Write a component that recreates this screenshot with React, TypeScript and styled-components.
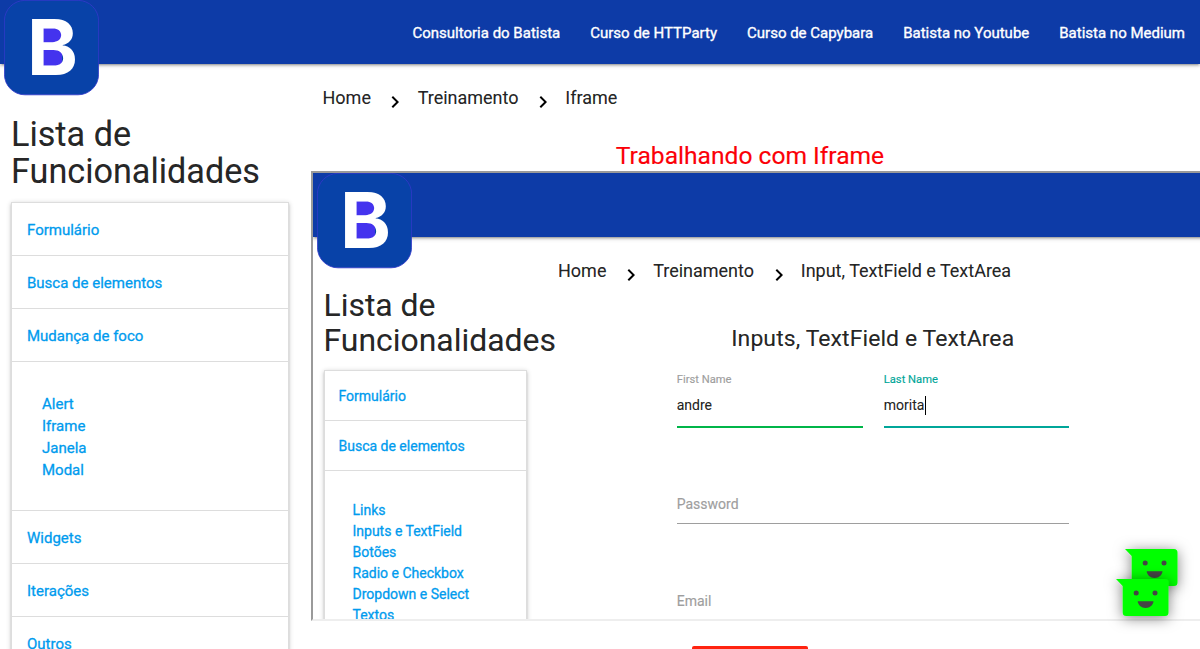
import React from "react";
import styled, { createGlobalStyle } from "styled-components";

const GlobalStyle = createGlobalStyle`
  *, *::before, *::after { box-sizing: border-box; }
  html, body { margin: 0; height: 100%; }
  body {
    overflow: hidden;
    background: #fff;
    color: rgba(0, 0, 0, 0.87);
    font-family: Roboto, "Liberation Sans", sans-serif;
    -webkit-text-stroke: 0.15px currentColor;
  }
`;

const Page = styled.div`
  position: relative;
  height: 649px;
  overflow: hidden;
  font-size: 15px;
`;

const NavBar = styled.nav`
  position: relative;
  height: 64px;
  background: #0d3ba7;
  display: flex;
  justify-content: flex-end;
  box-shadow: 0 2px 2px 0 rgba(0, 0, 0, 0.14), 0 3px 1px -2px rgba(0, 0, 0, 0.12),
    0 1px 5px 0 rgba(0, 0, 0, 0.2);
`;

const NavLink = styled.a`
  padding: 0 15px;
  line-height: 66px;
  font-size: 15px;
  -webkit-text-stroke-width: 0.35px;
  color: #fff;
  white-space: nowrap;
`;

const LogoSvg = styled.svg`
  position: absolute;
  left: 4px;
  top: 0;
`;

const Columns = styled.div`
  display: flex;
  align-items: flex-start;
`;

const Sidebar = styled.aside<{ $width: number; $pad: number; $top: number }>`
  flex: none;
  width: ${(p) => p.$width}px;
  padding: ${(p) => p.$top}px ${(p) => p.$pad}px 0;
`;

const SideTitle = styled.h4<{ $size: number; $line: number; $gap: number }>`
  margin: 0 0 ${(p) => p.$gap}px;
  font-size: ${(p) => p.$size}px;
  line-height: ${(p) => p.$line}px;
  font-weight: 400;
`;

const Menu = styled.ul`
  margin: 0;
  padding: 0;
  list-style: none;
  border: 1px solid #ddd;
  border-bottom: 0;
  box-shadow: 0 2px 2px 0 rgba(0, 0, 0, 0.14), 0 3px 1px -2px rgba(0, 0, 0, 0.12),
    0 1px 5px 0 rgba(0, 0, 0, 0.2);
`;

const MenuHeader = styled.li<{ $height: number; $pad: number; $shift?: number }>`
  height: ${(p) => p.$height}px;
  line-height: ${(p) => p.$height + (p.$shift || 0)}px;
  padding-left: ${(p) => p.$pad}px;
  border-bottom: 1px solid #ddd;
  -webkit-text-stroke-width: 0.3px;
  color: #009bee;
  white-space: nowrap;
`;

const MenuBody = styled.li<{ $pad: number; $line: number; $top: number }>`
  padding: ${(p) => p.$top}px 0 ${(p) => p.$top - 2}px ${(p) => p.$pad}px;
  line-height: ${(p) => p.$line}px;
  border-bottom: 1px solid #ddd;
`;

const SubLink = styled.a`
  display: block;
  -webkit-text-stroke-width: 0.3px;
  color: #009bee;
  white-space: nowrap;
`;

const Main = styled.main<{ $pad: number }>`
  flex: 1;
  min-width: 0;
  padding: 0 ${(p) => p.$pad}px;
`;

const Crumbs = styled.div<{ $pad: number; $top: number }>`
  display: flex;
  padding: ${(p) => p.$top}px 0 0 ${(p) => p.$pad}px;
  height: ${(p) => p.$top + 28}px;
  font-size: 18px;
  line-height: 24px;
  white-space: nowrap;
`;

const ChevronSvg = styled.svg`
  flex: none;
  margin: 4px 10.2px 0 12.5px;
  color: #000;
`;

const Title = styled.h5<{ $size: number; $color?: string; $top: number; $line: number; $spacing?: number }>`
  margin: ${(p) => p.$top}px 0 0;
  font-size: ${(p) => p.$size}px;
  line-height: ${(p) => p.$line}px;
  letter-spacing: ${(p) => p.$spacing || 0}px;
  font-weight: 400;
  text-align: center;
  color: ${(p) => p.$color || "inherit"};
`;

const Frame = styled.section`
  width: 899px;
  height: 450px;
  border: 2px solid;
  border-color: #9a9a9a #eee #eee #9a9a9a;
  overflow: hidden;
  font-size: 14px;
`;

const Form = styled.div`
  width: 392px;
  margin: 20px auto 0;
`;

const NameRow = styled.div`
  display: grid;
  grid-template-columns: 186px 185px;
  column-gap: 21px;
`;

const Field = styled.div<{ $line: string }>`
  height: 56px;
  border-bottom: 2px solid ${(p) => p.$line};
`;

const FieldLabel = styled.label<{ $active?: boolean }>`
  display: block;
  font-size: 11.2px;
  line-height: 16px;
  color: ${(p) => (p.$active ? "#00a699" : "#9e9e9e")};
`;

const FieldValue = styled.div`
  display: flex;
  align-items: center;
  height: 34px;
  font-size: 14px;
`;

const Caret = styled.span`
  width: 1px;
  height: 19px;
  margin-left: 1px;
  background: #000;
`;

const EmptyField = styled.div<{ $drop: number }>`
  height: 42px;
  margin-top: 54px;
  padding-top: ${(p) => p.$drop}px;
  line-height: 22px;
  color: #9e9e9e;
  border-bottom: 1px solid #9e9e9e;
`;

const RedButton = styled.div`
  width: 116px;
  height: 36px;
  margin: 25px auto 0;
  border-radius: 2px;
  background: #ff2310;
`;

const Chat = styled.svg`
  position: absolute;
  left: 1080px;
  top: 520px;
`;

const Logo = () => (
  <LogoSvg width="95" height="96" viewBox="0 0 95 96">
    <rect x="0.4" y="0.4" width="94.2" height="94.4" rx="20.5" fill="#0842a8" stroke="#3338cc" strokeWidth="0.8" />
    <rect x="38" y="28" width="20" height="40" fill="#4433ee" />
    <text x="23" y="75" fontFamily="Inter, sans-serif" fontWeight="700" fontSize="77" fill="#fff">
      B
    </text>
  </LogoSvg>
);

const Chevron = () => (
  <ChevronSvg width="24" height="24" viewBox="0 0 24 24">
    <path d="M10 6 8.59 7.41 13.17 12l-4.58 4.59L10 18l6-6z" fill="currentColor" />
  </ChevronSvg>
);

const Breadcrumbs = ({ items, pad, top }: { items: string[]; pad: number; top: number }) => (
  <Crumbs $pad={pad} $top={top}>
    {items.map((item, i) => (
      <React.Fragment key={item}>
        {i > 0 && <Chevron />}
        <span>{item}</span>
      </React.Fragment>
    ))}
  </Crumbs>
);

const Bubble = ({ x, y }: { x: number; y: number }) => (
  <g transform={`translate(${x} ${y})`} filter="url(#bubble-shadow)">
    <path d="M0 0H49a3.5 3.5 0 0 1 3.5 3.5V33.5a3.5 3.5 0 0 1-3.5 3.5H10.2a3.5 3.5 0 0 1-3.5-3.5V7z" fill="#0f0" />
    <circle cx="20.2" cy="14" r="2.5" fill="#444" />
    <circle cx="39" cy="14" r="2.5" fill="#444" />
    <path d="M21.7 22.3H37.5C37.2 26 34 29 29.6 29S22 26 21.7 22.3z" fill="#444" />
  </g>
);

const NAV = [
  "Consultoria do Batista",
  "Curso de HTTParty",
  "Curso de Capybara",
  "Batista no Youtube",
  "Batista no Medium",
];

const EmbeddedPage = () => (
  <Frame>
    <NavBar>
      <Logo />
    </NavBar>
    <Columns>
      <Sidebar $width={224.5} $pad={10.5} $top={51}>
        <SideTitle $size={31.92} $line={35} $gap={12}>
          Lista de Funcionalidades
        </SideTitle>
        <Menu>
          <MenuHeader $height={50} $pad={14}>Formulário</MenuHeader>
          <MenuHeader $height={50} $pad={14}>Busca de elementos</MenuHeader>
          <MenuBody $pad={28} $line={21} $top={29}>
            {["Links", "Inputs e TextField", "Botões", "Radio e Checkbox", "Dropdown e Select", "Textos"].map((t) => (
              <SubLink key={t}>{t}</SubLink>
            ))}
          </MenuBody>
        </Menu>
      </Sidebar>
      <Main $pad={10.5}>
        <Breadcrumbs items={["Home", "Treinamento", "Input, TextField e TextArea"]} pad={10} top={22} />
        <Title $size={22.96} $top={39} $line={26} $spacing={0.1}>
          Inputs, TextField e TextArea
        </Title>
        <Form>
          <NameRow>
            <Field $line="#00b548">
              <FieldLabel>First Name</FieldLabel>
              <FieldValue>andre</FieldValue>
            </Field>
            <Field $line="#00a699">
              <FieldLabel $active>Last Name</FieldLabel>
              <FieldValue>
                morita
                <Caret />
              </FieldValue>
            </Field>
          </NameRow>
          <EmptyField $drop={11}>Password</EmptyField>
          <EmptyField $drop={12}>Email</EmptyField>
        </Form>
      </Main>
    </Columns>
  </Frame>
);

export default function App() {
  return (
    <Page>
      <GlobalStyle />
      <NavBar>
        <Logo />
        {NAV.map((item) => (
          <NavLink key={item}>{item}</NavLink>
        ))}
      </NavBar>
      <Columns>
        <Sidebar $width={300} $pad={11} $top={52}>
          <SideTitle $size={34.2} $line={37} $gap={12}>
            Lista de Funcionalidades
          </SideTitle>
          <Menu>
            <MenuHeader $shift={2} $height={53} $pad={15}>Formulário</MenuHeader>
            <MenuHeader $shift={2} $height={53} $pad={15}>Busca de elementos</MenuHeader>
            <MenuHeader $shift={2} $height={53} $pad={15}>Mudança de foco</MenuHeader>
            <MenuBody $pad={30} $line={22} $top={31}>
              {["Alert", "Iframe", "Janela", "Modal"].map((t) => (
                <SubLink key={t}>{t}</SubLink>
              ))}
            </MenuBody>
            <MenuHeader $shift={2} $height={53} $pad={15}>Widgets</MenuHeader>
            <MenuHeader $shift={2} $height={53} $pad={15}>Iterações</MenuHeader>
            <MenuHeader $shift={2} $height={53} $pad={15}>Outros</MenuHeader>
          </Menu>
        </Sidebar>
        <Main $pad={11}>
          <Breadcrumbs items={["Home", "Treinamento", "Iframe"]} pad={11.5} top={22} />
          <Title $size={24.6} $color="#fb0007" $top={27} $line={30}>
            Trabalhando com Iframe
          </Title>
          <EmbeddedPage />
          <RedButton />
        </Main>
      </Columns>
      <Chat width="120" height="129" viewBox="0 0 120 129">
        <defs>
          <filter id="bubble-shadow" x="-50%" y="-60%" width="200%" height="220%">
            <feDropShadow dx="0" dy="2" stdDeviation="7" floodColor="#000" floodOpacity="0.5" />
          </filter>
        </defs>
        <Bubble x={45} y={29} />
        <Bubble x={36} y={59} />
      </Chat>
    </Page>
  );
}
